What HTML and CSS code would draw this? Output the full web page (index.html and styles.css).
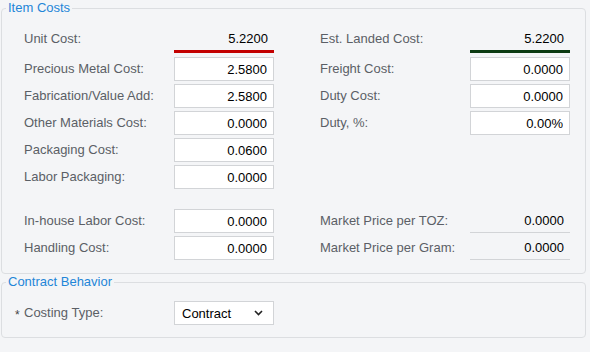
FILE: index.html
```html
<!DOCTYPE html>
<html lang="en">
<head>
  <meta charset="UTF-8" />
  <title>Item Costs</title>
  <link rel="stylesheet" href="styles.css">
</head>
<body>

  <fieldset class="group">
    <legend>Item Costs</legend>
    <div class="form-grid costs">
      <label class="top">Unit Cost:</label>
      <div class="readonly total-red">5.2200</div>
      <span></span>
      <label class="top">Est. Landed Cost:</label>
      <div class="readonly total-green">5.2200</div>

      <label>Precious Metal Cost:</label>
      <input type="text" value="2.5800" />
      <span></span>
      <label>Freight Cost:</label>
      <input type="text" value="0.0000" />

      <label>Fabrication/Value Add:</label>
      <input type="text" value="2.5800" />
      <span></span>
      <label>Duty Cost:</label>
      <input type="text" value="0.0000" />

      <label>Other Materials Cost:</label>
      <input type="text" value="0.0000" />
      <span></span>
      <label>Duty, %:</label>
      <input type="text" value="0.00%" />

      <label>Packaging Cost:</label>
      <input type="text" value="0.0600" />
      <span></span><span></span><span></span>

      <label>Labor Packaging:</label>
      <input type="text" value="0.0000" />
      <span></span><span></span><span></span>

      <div class="spacer"></div>

      <label>In-house Labor Cost:</label>
      <input type="text" value="0.0000" />
      <span></span>
      <label>Market Price per TOZ:</label>
      <div class="readonly">0.0000</div>

      <label>Handling Cost:</label>
      <input type="text" value="0.0000" />
      <span></span>
      <label>Market Price per Gram:</label>
      <div class="readonly">0.0000</div>
    </div>
  </fieldset>

  <fieldset class="group last">
    <legend>Contract Behavior</legend>
    <div class="form-grid contract">
      <label class="required">Costing Type:</label>
      <div class="select">
        <span>Contract</span>
        <svg width="9" height="6" viewBox="0 0 9 6"><path d="M1 1 L4.5 4.5 L8 1" fill="none" stroke="#222" stroke-width="1.6"/></svg>
      </div>
    </div>
  </fieldset>

</body>
</html>
```

FILE: styles.css
```css
body {
  margin: 0;
  padding: 0 4px 0 1px;
  background: #f4f5f7;
  font-family: "Liberation Sans", Arial, sans-serif;
  font-size: 13px;
  color: #000;
}

.group {
  margin: 0;
  padding: 0 4px 13px 4px;
  border: 1px solid #dcdee1;
  border-radius: 4px;
  min-width: 0;
}

.group.last {
  padding-bottom: 12px;
}

.group legend {
  padding: 0 2px;
  line-height: 16px;
  color: #1f86d8;
}

.form-grid {
  display: grid;
  grid-template-columns: 150px 100px 46px 150px 100px;
  row-gap: 3px;
  margin-left: 18px;
}

.costs {
  padding-top: 14px;
}

.contract {
  padding-top: 11px;
}

.form-grid label {
  display: flex;
  align-items: center;
  height: 24px;
  box-sizing: border-box;
  padding-bottom: 2px;
  color: #5b5f66;
  white-space: nowrap;
}

.form-grid label.top {
  align-items: flex-start;
  padding: 1px 0 0;
}

.form-grid .spacer {
  grid-column: 1 / -1;
  height: 14px;
}

.form-grid input,
.form-grid .readonly {
  width: 100%;
  height: 24px;
  box-sizing: border-box;
  margin: 0;
  padding: 0 6px;
  font: inherit;
  color: #000;
  text-align: right;
}

.form-grid input {
  background: #fff;
  border: 1px solid #d2d4d7;
  border-radius: 0;
  outline: none;
}

.form-grid .readonly {
  display: flex;
  align-items: center;
  justify-content: flex-end;
  border-bottom: 1px solid #d2d4d7;
}

.form-grid .total-red,
.form-grid .total-green {
  height: 23px;
  align-items: flex-start;
  padding-top: 1px;
  border-bottom: 3px solid #c30000;
}

.form-grid .total-green {
  border-bottom-color: #0c3b12;
}

.required {
  position: relative;
}

.required::before {
  content: "*";
  position: absolute;
  left: -9px;
  top: 7px;
  color: #444;
  font-size: 12px;
}

.select {
  display: flex;
  align-items: center;
  justify-content: space-between;
  height: 24px;
  box-sizing: border-box;
  padding: 0 10px 0 7px;
  background: #fff;
  border: 1px solid #d2d4d7;
}

.select svg {
  display: block;
}
```
